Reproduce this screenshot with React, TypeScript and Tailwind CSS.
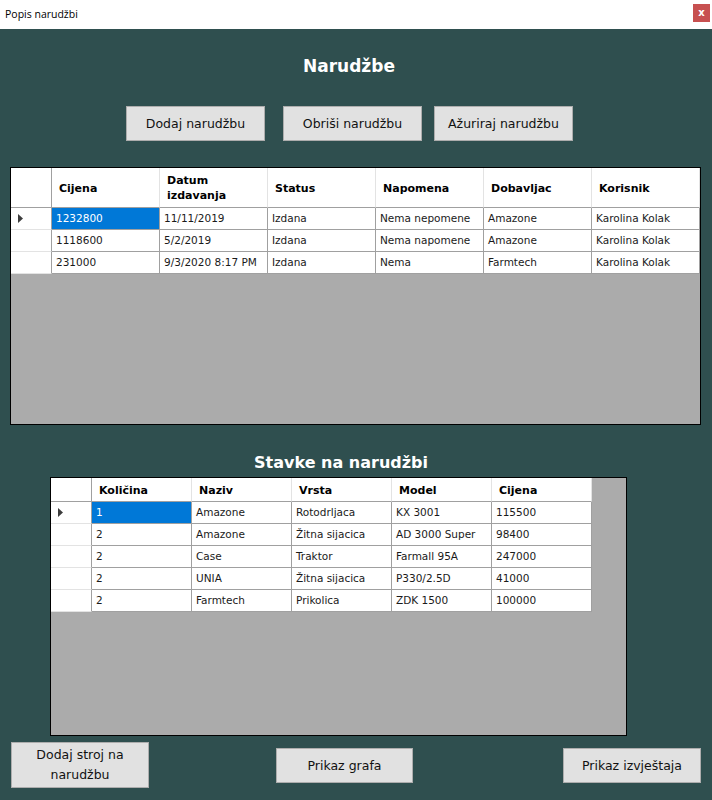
import type { ReactNode } from "react";

type GridProps = {
  columns: string[][];
  rows: string[][];
  colWidth: number;
  headerHeight: number;
  widthClass: string;
  heightClass: string;
};

const orders = [
  ["1232800", "11/11/2019", "Izdana", "Nema nepomene", "Amazone", "Karolina Kolak"],
  ["1118600", "5/2/2019", "Izdana", "Nema napomene", "Amazone", "Karolina Kolak"],
  ["231000", "9/3/2020 8:17 PM", "Izdana", "Nema", "Farmtech", "Karolina Kolak"],
];

const items = [
  ["1", "Amazone", "Rotodrljaca", "KX 3001", "115500"],
  ["2", "Amazone", "Žitna sijacica", "AD 3000 Super", "98400"],
  ["2", "Case", "Traktor", "Farmall 95A", "247000"],
  ["2", "UNIA", "Žitna sijacica", "P330/2.5D", "41000"],
  ["2", "Farmtech", "Prikolica", "ZDK 1500", "100000"],
];

function RowArrow() {
  return (
    <svg width="5" height="9" viewBox="0 0 5 9">
      <path d="M0 0 L5 4.5 L0 9 Z" fill="#3c3c3c" />
    </svg>
  );
}

function Button({ children, className }: { children: ReactNode; className: string }) {
  return (
    <button
      type="button"
      className={`flex items-center justify-center border border-[#adadad] bg-[#e1e1e1] text-center text-[12.5px] leading-[20px] text-[#111] ${className}`}
    >
      {children}
    </button>
  );
}

function DataGrid({ columns, rows, colWidth, headerHeight, widthClass, heightClass }: GridProps) {
  return (
    <div className={`flex flex-col border border-black bg-[#ababab] ${widthClass} ${heightClass}`}>
      <div className="flex">
        <div
          className="w-[41px] shrink-0 border-r border-b border-r-[#a0a0a0] border-b-[#a0a0a0] bg-white"
          style={{ height: headerHeight }}
        />
        {columns.map((lines, index) => (
          <div
            key={index}
            className="flex shrink-0 flex-col justify-center border-r border-b border-r-[#e3e3e3] border-b-[#a0a0a0] bg-white pt-[1px] pl-[7px] text-[11px] font-bold leading-[15px] text-black"
            style={{ height: headerHeight, width: colWidth }}
          >
            {lines.map((line) => (
              <span key={line}>{line}</span>
            ))}
          </div>
        ))}
      </div>
      {rows.map((row, rowIndex) => (
        <div key={rowIndex} className="flex">
          <div className="flex h-[22px] w-[41px] shrink-0 items-center border-r border-b border-r-[#a0a0a0] border-b-[#e3e3e3] bg-white pl-[7px]">
            {rowIndex === 0 ? <RowArrow /> : null}
          </div>
          {row.map((cell, cellIndex) => {
            const selected = rowIndex === 0 && cellIndex === 0;
            return (
              <div
                key={cellIndex}
                className={`flex h-[22px] shrink-0 items-center border-r border-b border-[#a0a0a0] pl-[4px] text-[10.5px] whitespace-nowrap ${
                  selected ? "bg-[#0078d7] text-white" : "bg-white text-[#1a1a1a]"
                }`}
                style={{ width: colWidth }}
              >
                {cell}
              </div>
            );
          })}
        </div>
      ))}
    </div>
  );
}

export default function App() {
  return (
    <div className="flex h-[800px] w-[712px] flex-col bg-[#2f4f4f] font-['Century_Gothic','DejaVu_Sans',sans-serif]">
      <div className="flex h-[29px] shrink-0 items-center justify-between bg-white">
        <span className="pl-[5px] font-['Open_Sans','Noto_Sans',sans-serif] text-[10.5px] text-black">Popis narudžbi</span>
        <div className="mr-[2px] mb-[4px] flex h-[18px] w-[17px] items-center justify-center bg-[#c75050] text-[10px] font-bold leading-none text-white">
          x
        </div>
      </div>

      <div className="mt-[26px] flex h-[24px] w-[698px] items-center justify-center text-[17px] font-bold text-white">
        Narudžbe
      </div>

      <div className="mt-[27px] flex">
        <Button className="ml-[126px] h-[35px] w-[139px]">Dodaj narudžbu</Button>
        <Button className="ml-[18px] h-[35px] w-[139px]">Obriši narudžbu</Button>
        <Button className="ml-[12px] h-[35px] w-[139px]">Ažuriraj narudžbu</Button>
      </div>

      <div className="mt-[26px] pl-[10px]">
        <DataGrid
          columns={[["Cijena"], ["Datum", "izdavanja"], ["Status"], ["Napomena"], ["Dobavljac"], ["Korisnik"]]}
          rows={orders}
          colWidth={108}
          headerHeight={40}
          widthClass="w-[691px]"
          heightClass="h-[258px]"
        />
      </div>

      <div className="mt-[26px] flex h-[24px] w-[682px] items-center justify-center text-[16px] font-bold text-white">
        Stavke na narudžbi
      </div>

      <div className="mt-[2px] pl-[50px]">
        <DataGrid
          columns={[["Količina"], ["Naziv"], ["Vrsta"], ["Model"], ["Cijena"]]}
          rows={items}
          colWidth={100}
          headerHeight={24}
          widthClass="w-[577px]"
          heightClass="h-[259px]"
        />
      </div>

      <div className="mt-[6px] flex items-start">
        <Button className="ml-[11px] h-[46px] w-[138px] px-[16px]">Dodaj stroj na narudžbu</Button>
        <Button className="mt-[6px] ml-[127px] h-[35px] w-[137px]">Prikaz grafa</Button>
        <Button className="mt-[6px] ml-[150px] h-[35px] w-[138px]">Prikaz izvještaja</Button>
      </div>
    </div>
  );
}
